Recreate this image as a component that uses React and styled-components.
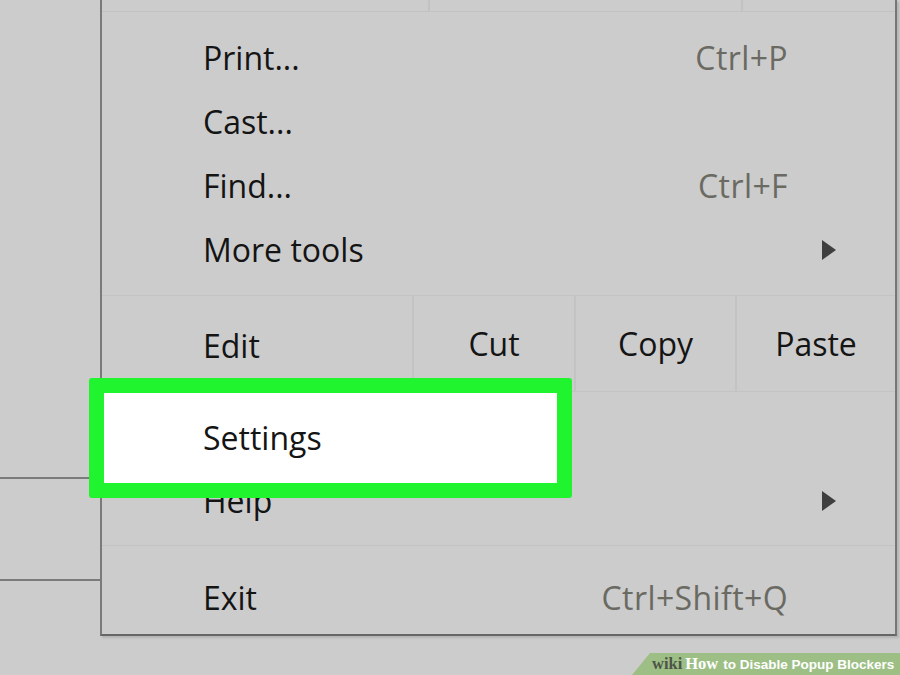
import React from 'react';
import styled, {createGlobalStyle} from 'styled-components';

const GlobalStyle = createGlobalStyle`
  html, body {
    margin: 0;
    padding: 0;
    background: #cccccc;
  }
`;

const Screen = styled.div`
    width: 900px;
    height: 675px;
    overflow: hidden;
    display: flex;
    flex-direction: column;
    background: #cccccc;
    font-family: "Open Sans", "Noto Sans", sans-serif;
`

const Desk = styled.div`
    display: flex;
    height: 636px;
`

const BackWindow = styled.div`
    width: 100px;
    display: flex;
    flex-direction: column;
`

const WindowRule = styled.div`
    height: 2px;
    background: #7b7b7b;
    margin-top: ${props => props.$gap}px;
`

const Menu = styled.div`
    width: 793px;
    border-left: 2px solid #7a7a7a;
    border-right: 2px solid #767676;
    border-bottom: 2px solid #666666;
    box-shadow: 2px 2px 2px rgba(0, 0, 0, 0.12);
    display: flex;
    flex-direction: column;
    background: #cccccc;
`

const TopStrip = styled.div`
    height: 11px;
    display: grid;
    grid-template-columns: 326px 313px 1fr;
    border-bottom: 1px solid #c2c2c2;
    div + div {
      border-left: 2px solid #c2c2c2;
    }
`

const Group = styled.div`
    display: flex;
    flex-direction: column;
    padding: ${props => props.$pad};
    border-bottom: ${props => props.$last ? 'none' : '1px solid #c3c3c3'};
`

const Row = styled.div`
    position: relative;
    height: ${props => props.$h}px;
    display: flex;
    align-items: center;
    padding: 0 107px 0 101px;
    font-size: 32px;
    color: #141414;
`

const Label = styled.span`
    flex: 1;
    position: relative;
    z-index: ${props => props.$front ? 2 : 0};
`

const Shortcut = styled.span`
    color: #6a6a62;
    letter-spacing: 0.4px;
`

const Arrow = styled.svg`
    width: 14px;
    height: 20px;
    margin-right: -48px;
`

const Highlight = styled.div`
    position: absolute;
    z-index: 1;
    left: -13px;
    top: -28px;
    width: 483px;
    height: 120px;
    box-sizing: border-box;
    border: 15px solid #1ff42f;
    border-radius: 3px;
    background: #ffffff;
`

const EditRow = styled.div`
    height: 97px;
    display: grid;
    grid-template-columns: 310px 162px 161px 1fr;
    border-bottom: 1px solid #c3c3c3;
    font-size: 32px;
    color: #141414;
`

const EditCell = styled.div`
    display: flex;
    align-items: center;
    justify-content: ${props => props.$first ? 'flex-start' : 'center'};
    padding-left: ${props => props.$first ? '101px' : '0'};
    padding-top: ${props => props.$first ? '4px' : '0'};
    border-left: ${props => props.$first ? 'none' : '2px solid #c3c3c3'};
`

const Footer = styled.div`
    flex: 1;
    display: flex;
    justify-content: flex-end;
    align-items: flex-end;
`

const Badge = styled.div`
    width: 248px;
    height: 22px;
    padding-left: 20px;
    display: flex;
    align-items: center;
    background: #9dbf86;
    clip-path: polygon(18px 0, 100% 0, 100% 100%, 0 100%);
    font-family: "Liberation Sans", Arial, sans-serif;
    font-weight: bold;
    font-size: 13.5px;
    color: #ffffff;
    white-space: nowrap;
`

const Wiki = styled.span`
    font-family: "Liberation Serif", serif;
    font-size: 16.5px;
    color: ${props => props.$dark ? '#4e5548' : '#ffffff'};
    margin-right: ${props => props.$dark ? '3px' : '5px'};
`

const SubArrow = () => (
    <Arrow viewBox="0 0 14 20">
        <polygon points="0,0 14,10 0,20" fill="#3f3f3f"/>
    </Arrow>
);

export default function App() {
    return (
        <Screen>
            <GlobalStyle/>
            <Desk>
                <BackWindow>
                    <WindowRule $gap={477}/>
                    <WindowRule $gap={100}/>
                </BackWindow>
                <Menu>
                    <TopStrip>
                        <div/>
                        <div/>
                        <div/>
                    </TopStrip>
                    <Group $pad="14px 0 13px">
                        <Row $h={64}><Label>Print...</Label><Shortcut>Ctrl+P</Shortcut></Row>
                        <Row $h={64}><Label>Cast...</Label></Row>
                        <Row $h={64}><Label>Find...</Label><Shortcut>Ctrl+F</Shortcut></Row>
                        <Row $h={64}><Label>More tools</Label><SubArrow/></Row>
                    </Group>
                    <EditRow>
                        <EditCell $first>Edit</EditCell>
                        <EditCell>Cut</EditCell>
                        <EditCell>Copy</EditCell>
                        <EditCell>Paste</EditCell>
                    </EditRow>
                    <Group $pad="14px 0 13px">
                        <Row $h={63}>
                            <Highlight/>
                            <Label $front>Settings</Label>
                        </Row>
                        <Row $h={63}><Label>Help</Label><SubArrow/></Row>
                    </Group>
                    <Group $pad="19px 0 5px" $last>
                        <Row $h={64}><Label>Exit</Label><Shortcut>Ctrl+Shift+Q</Shortcut></Row>
                    </Group>
                </Menu>
            </Desk>
            <Footer>
                <Badge>
                    <Wiki $dark>wiki</Wiki>
                    <Wiki>How</Wiki>
                    to Disable Popup Blockers
                </Badge>
            </Footer>
        </Screen>
    );
}
